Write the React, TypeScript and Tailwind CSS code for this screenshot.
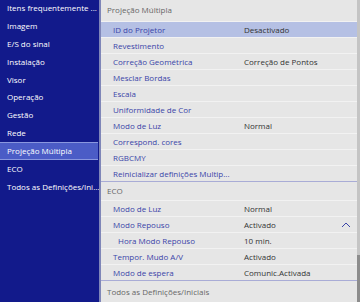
import React from 'react';

const leftItems = [
    'Itens frequentemente ...',
    'Imagem',
    'E/S do sinal',
    'Instalação',
    'Visor',
    'Operação',
    'Gestão',
    'Rede',
    'Projeção Múltipla',
    'ECO',
    'Todos as Definições/Ini...',
];

interface Row {
    label: string;
    value?: string;
    selected?: boolean;
    sub?: boolean;
    open?: boolean;
}

const multiRows: Row[] = [
    { label: 'ID do Projetor', value: 'Desactivado', selected: true },
    { label: 'Revestimento' },
    { label: 'Correção Geométrica', value: 'Correção de Pontos' },
    { label: 'Mesclar Bordas' },
    { label: 'Escala' },
    { label: 'Uniformidade de Cor' },
    { label: 'Modo de Luz', value: 'Normal' },
    { label: 'Correspond. cores' },
    { label: 'RGBCMY' },
    { label: 'Reinicializar definições Multip...' },
];

const ecoRows: Row[] = [
    { label: 'Modo de Luz', value: 'Normal' },
    { label: 'Modo Repouso', value: 'Activado', open: true },
    { label: 'Hora Modo Repouso', value: '10 min.', sub: true },
    { label: 'Tempor. Mudo A/V', value: 'Activado' },
    { label: 'Modo de espera', value: 'Comunic.Activada' },
];

const MenuRow: React.FC<{ row: Row }> = ({ row }) => (
    <div
        className={`flex items-center h-[16px] border-t border-[#f2f2f2] ${
            row.selected ? 'bg-[#b5c0e4]' : ''
        }`}
    >
        <div
            className={`w-[143px] shrink-0 whitespace-nowrap leading-[12px] text-[#3a44a8] ${
                row.sub ? 'pl-[17px]' : 'pl-[12px]'
            }`}
        >
            {row.label}
        </div>
        <div className="flex-1 whitespace-nowrap leading-[12px] text-[#333333]">{row.value}</div>
        {row.open && (
            <svg width="10" height="6" viewBox="0 0 10 6" className="mr-[6px]">
                <path d="M1 5 L5 1 L9 5" fill="none" stroke="#3b45a8" strokeWidth="1" />
            </svg>
        )}
    </div>
);

export default function App() {
    return (
        <div
            className="flex w-[360px] h-[302px] overflow-hidden text-[8px]"
            style={{ fontFamily: '"Open Sans", "Noto Sans", sans-serif' }}
        >
            <div className="w-[99px] shrink-0 bg-[#121a8b] pr-[1px] text-white">
                {leftItems.map((item) => (
                    <div
                        key={item}
                        className={`flex items-center h-[17.9px] pl-[7px] whitespace-nowrap leading-[12px] ${
                            item === 'Projeção Múltipla'
                                ? 'bg-[#4b5cc6] border-y border-[#8a97df]'
                                : ''
                        } ${item === leftItems[0] ? '-mt-[1px]' : ''}`}
                    >
                        {item}
                    </div>
                ))}
            </div>
            <div className="flex-1 flex border-l-2 border-[#7f86b8] bg-[#e6e6e6]">
                <div className="flex-1 flex flex-col">
                    <div className="h-[21px] flex items-center pl-[6px] pb-[1px] leading-[12px] text-[#666666]">
                        Projeção Múltipla
                    </div>
                    {multiRows.map((r) => (
                        <MenuRow key={r.label} row={r} />
                    ))}
                    <div className="h-[19px] flex items-center pl-[6px] leading-[12px] text-[#666666] border-t border-[#a9acd6]">
                        ECO
                    </div>
                    {ecoRows.map((r) => (
                        <MenuRow key={r.label} row={r} />
                    ))}
                    <div className="flex-1 flex items-center pl-[6px] leading-[12px] text-[#666666] border-t border-[#a9acd6]">
                        Todos as Definições/Iniciais
                    </div>
                </div>
                <div className="w-[3px] flex flex-col bg-[#c4c4c4]">
                    <div className="flex-1" />
                    <div className="h-[47px] bg-[#8c8c8c]" />
                </div>
            </div>
        </div>
    );
}
